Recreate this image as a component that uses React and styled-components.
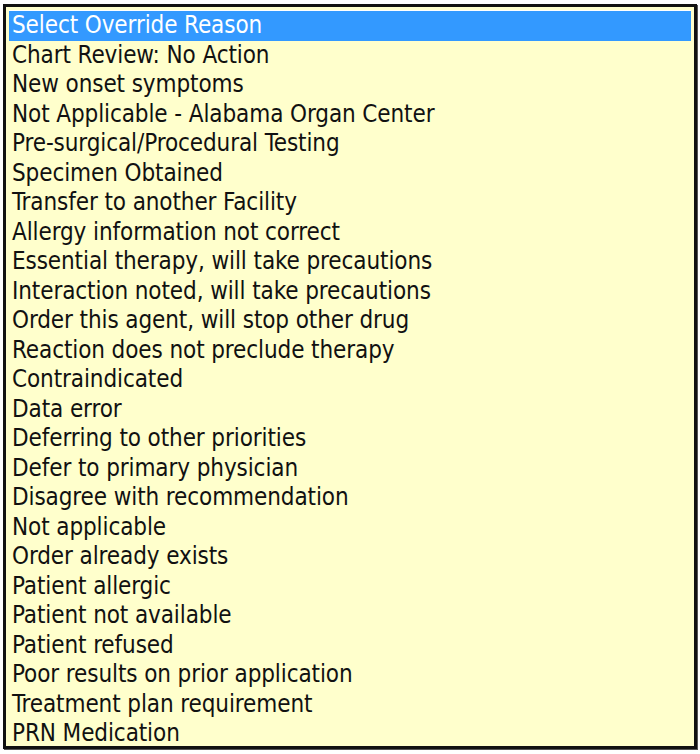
import React from 'react';
import styled, { createGlobalStyle } from 'styled-components';

const GlobalStyle = createGlobalStyle`
    html, body {
        margin: 0;
        padding: 0;
        background: #ffffff;
    }
`;

const Page = styled.div`
    padding: 4px 4px 4px 3px;
    width: 700px;
    box-sizing: border-box;
`;

const ListBox = styled.ul`
    list-style: none;
    margin: 0;
    padding: 3px;
    width: 694px;
    height: 745px;
    box-sizing: border-box;
    background: #ffffcc;
    border: 3px solid #111111;
    box-shadow: 1px 1px 0 #555;
    overflow: hidden;
    font-family: "DejaVu Sans Condensed", "DejaVu Sans", Tahoma, sans-serif;
    font-stretch: condensed;
    font-size: 24px;
    letter-spacing: -0.1px;
`;

const Option = styled.li`
    height: 29.5px;
    line-height: 29.5px;
    padding-left: 3px;
    white-space: nowrap;
    color: ${({ selected }) => (selected ? '#ffffff' : '#111111')};
    background: ${({ selected }) => (selected ? '#3399ff' : 'transparent')};
    border-top: ${({ selected }) => (selected ? '1px solid #ffffff' : 'none')};
`;

const reasons = [
    'Select Override Reason',
    'Chart Review: No Action',
    'New onset symptoms',
    'Not Applicable - Alabama Organ Center',
    'Pre-surgical/Procedural Testing',
    'Specimen Obtained',
    'Transfer to another Facility',
    'Allergy information not correct',
    'Essential therapy, will take precautions',
    'Interaction noted, will take precautions',
    'Order this agent, will stop other drug',
    'Reaction does not preclude therapy',
    'Contraindicated',
    'Data error',
    'Deferring to other priorities',
    'Defer to primary physician',
    'Disagree with recommendation',
    'Not applicable',
    'Order already exists',
    'Patient allergic',
    'Patient not available',
    'Patient refused',
    'Poor results on prior application',
    'Treatment plan requirement',
    'PRN Medication'
];

export default function App() {
    return (
        <>
            <GlobalStyle />
            <Page>
                <ListBox>
                    {reasons.map((reason, index) => (
                        <Option key={reason} selected={index === 0}>
                            {reason}
                        </Option>
                    ))}
                </ListBox>
            </Page>
        </>
    );
}
